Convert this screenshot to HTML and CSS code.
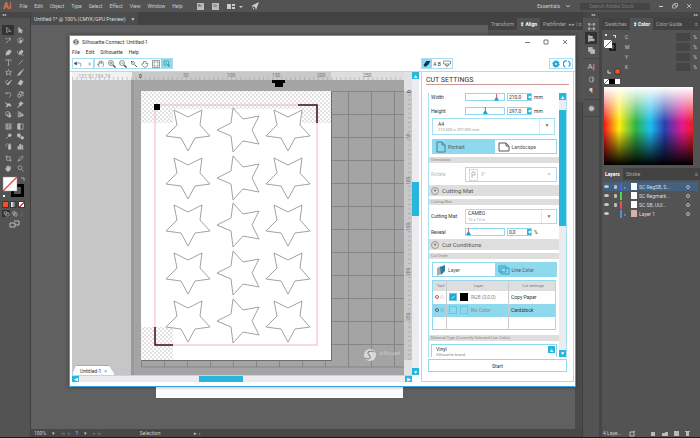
FILE: index.html
```
<!DOCTYPE html>
<html lang="en">
<head>
    <meta charset="UTF-8">
    <meta name="viewport" content="width=device-width, initial-scale=1.0">
    <title>Silhouette Connect: Untitled-1</title>
    <link rel="stylesheet" href="styles.css">
</head>
<body>

<header class="menubar">
    <span class="logo">Ai</span>
    <nav class="menu">
        <a href="#">File</a><a href="#">Edit</a><a href="#">Object</a><a href="#">Type</a><a href="#">Select</a><a href="#">Effect</a><a href="#">View</a><a href="#">Window</a><a href="#">Help</a>
    </nav>
    <button class="app-chip">Br</button>
    <button class="app-chip">St</button>
    <button class="bare" aria-label="Arrange documents"><svg width="16" height="7"><path fill="#ccc" d="M0 1h4v5H0zM5 1h3v2H5zM5 4h3v2H5zM12 3h4l-2 2z"/></svg></button>
    <button class="bare" aria-label="Share"><svg width="8" height="8"><path fill="#ccc" d="M8 0L5 8 4 5 0 4zM1 5l2 1v2z"/></svg></button>
    <div class="menubar-right">
        <button class="bare">Essentials<svg width="12" height="5"><path fill="none" stroke="#bbb" d="M6 1l2 2 2-2"/></svg></button>
        <input class="search" type="text" placeholder="Search Adobe Stock" aria-label="Search Adobe Stock">
        <button class="bare" aria-label="Minimize"><svg width="6" height="6"><path stroke="#ccc" d="M1 3.500h4"/></svg></button>
        <button class="bare" aria-label="Restore"><svg width="6" height="6"><path fill="none" stroke="#ccc" stroke-width=".7" d="M2 2V.5h3.500v3H4M.5 2h3.500v3H.5z"/></svg></button>
        <button class="bare" aria-label="Close"><svg width="6" height="6"><path stroke="#ccc" stroke-width=".8" d="M1 1l4 4M5 1L1 5"/></svg></button>
    </div>
</header>

<div class="workspace">
    <aside class="tools">
        <div class="panel-grip">◂◂</div>
        <div class="tool-group">
            <button class="active" aria-label="Selection"><svg viewBox="0 0 16 16"><path d="M4 1v12l3.500-3H13z"/></svg></button>
            <button aria-label="Direct selection"><svg viewBox="0 0 16 16"><path class="f" d="M4 1v12l3-3 2 4 2-1-2-4h4z"/></svg></button>
            <button aria-label="Magic wand"><svg viewBox="0 0 16 16"><path d="M2 14L9 7M10 1v4M8 4l5 2M14 3l-3 2M1 4h5M12 8l2 2"/></svg></button>
            <button aria-label="Lasso"><svg viewBox="0 0 16 16"><path d="M3 10C-1 5 4 2 8 2s8 3 5 7-6 2-9 2 0 4 2 3"/><path class="f" d="M7 5v9l5-4z"/></svg></button>
        </div>
        <div class="tool-group">
            <button aria-label="Pen"><svg viewBox="0 0 16 16"><path class="f" d="M2 14l2-8 6-4 4 4-4 6zM11 1l4 4"/></svg></button>
            <button aria-label="Curvature"><svg viewBox="0 0 16 16"><path class="f" d="M5 12l1-6 5-4 3 4-4 5z"/><path d="M1 4c-1 5 3 10 8 9s2 2 6 1"/></svg></button>
            <button aria-label="Type"><svg viewBox="0 0 16 16"><path d="M2 5V2h12v3M8 2v12M6 14h4"/></svg></button>
            <button aria-label="Line"><svg viewBox="0 0 16 16"><path d="M3 13L13 3"/></svg></button>
            <button aria-label="Star"><svg viewBox="0 0 16 16"><path d="M8 1l2 5h5l-4 3 2 5-5-3-5 3 2-5-4-3h5z"/></svg></button>
            <button aria-label="Brush"><svg viewBox="0 0 16 16"><path class="f" d="M15 1L8 10 6 8zM6 9l2 2c-1 3-4 4-7 3 3-1 2-4 5-5z"/></svg></button>
            <button aria-label="Shaper"><svg viewBox="0 0 16 16"><path d="M7 4C2 2-1 8 4 11s5 0 6-1"/><path class="f" d="M15 3L8 12l-3 1 1-3z"/></svg></button>
            <button aria-label="Eraser"><svg viewBox="0 0 16 16"><path class="f" d="M8 2l6 4-5 8-6-4zM1 10l7 4"/></svg></button>
        </div>
        <div class="tool-group">
            <button aria-label="Rotate"><svg viewBox="0 0 16 16"><path d="M2 2v4h4M3 6c3-4 10-3 10 3 0 3-2 5-4 5"/></svg></button>
            <button aria-label="Scale"><svg viewBox="0 0 16 16"><path d="M2 8v6h6V8zM5 7V2h9v9h-5M8 8l4-4M9 4h3v3"/></svg></button>
            <button aria-label="Width"><svg viewBox="0 0 16 16"><path class="f" d="M1 3l4 4 6-1 3 6-5-2-6 4 2-5z"/></svg></button>
            <button aria-label="Puppet warp"><svg viewBox="0 0 16 16"><path class="f" d="M9 1l5 5-3 1-2 4-5-5 4-2zM6 9l1 1-5 5z"/></svg></button>
            <button aria-label="Shape builder"><svg viewBox="0 0 16 16"><circle cx="6" cy="6" r="5"/><circle cx="9" cy="9" r="4"/><path class="f" d="M10 8v7l4-3z"/></svg></button>
            <button aria-label="Perspective grid"><svg viewBox="0 0 16 16"><path d="M3 1v13l11-3V8zM3 5l11 4M3 10h11M7 3v10M11 6v5"/></svg></button>
        </div>
        <div class="tool-group">
            <button aria-label="Mesh"><svg viewBox="0 0 16 16"><path d="M2 2h12v12H2zM2 6c4 3 8-2 12 1M2 11c4 2 8-2 12 0M6 2c-2 4 2 8 0 12M11 2c-2 4 2 8 0 12"/></svg></button>
            <button aria-label="Gradient"><svg viewBox="0 0 16 16"><path d="M2 2h12v12H2z"/><path class="f" d="M2 2h5v12H2z"/></svg></button>
            <button aria-label="Eyedropper"><svg viewBox="0 0 16 16"><path class="f" d="M11 1l4 4-4 4-4-4z"/><path d="M9 7l-6 6-1 1"/></svg></button>
            <button aria-label="Blend"><svg viewBox="0 0 16 16"><path class="f" d="M1 2h6v6H1z"/><circle cx="7" cy="8" r="3"/><circle class="f" cx="12" cy="11" r="3"/></svg></button>
            <button aria-label="Symbol sprayer"><svg viewBox="0 0 16 16"><path d="M1 3h2M1 7h2M4 1h2M4 5h2"/><path class="f" d="M8 5h5v9H8zM9 2h3v2H9z"/></svg></button>
            <button aria-label="Column graph"><svg viewBox="0 0 16 16"><path class="f" d="M2 8h2v5H2zM6 3h3v10H6zM11 5h2v8h-2z"/><path d="M1 14h14"/></svg></button>
        </div>
        <div class="tool-group">
            <button aria-label="Artboard"><svg viewBox="0 0 16 16"><path d="M4 1v11h11M1 4h11v11"/></svg></button>
            <button aria-label="Slice"><svg viewBox="0 0 16 16"><path d="M2 14L6 7l6-5 2 3-5 6z"/></svg></button>
            <button aria-label="Hand"><svg viewBox="0 0 16 16"><path class="f" d="M5 14L1 8l3 1V3l2 4 1-6 2 6 3-4v8l-3 3z"/></svg></button>
            <button aria-label="Zoom"><svg viewBox="0 0 16 16"><circle cx="7" cy="6" r="4.500"/><path d="M10 10l5 5"/></svg></button>
        </div>
        <svg class="fill-stroke" width="26" height="24" viewBox="0 0 26 24">
            <path fill="none" stroke="#000" stroke-width="3" d="M10.500 10.500h10v10h-10z"/>
            <path fill="#fff" stroke="#888" stroke-width=".5" d="M1 2h14v14H1z"/>
            <path stroke="#f23b3b" stroke-width="1.200" d="M1 16L15 2"/>
            <path fill="none" stroke="#aaa" d="M19 3h3v3"/>
            <path fill="#fff" d="M1 20h2v2H1z"/>
        </svg>
        <div class="paint-modes">
            <button class="solid" aria-label="Color"></button>
            <button class="grad" aria-label="Gradient"></button>
            <button class="none" aria-label="None"></button>
        </div>
        <svg class="draw-modes" width="26" height="20" viewBox="0 0 26 20">
            <path fill="#333" d="M0 0h8v7H0z"/>
            <g fill="none" stroke="#aaa" stroke-width=".8"><circle cx="3.500" cy="3" r="1.500"/><path d="M4 3h3v3H4z"/><circle cx="12" cy="3" r="1.500"/><path d="M12 3h3v3h-3z"/><path stroke="#777" d="M20 2v4"/></g>
            <path fill="none" stroke="#bbb" d="M8 13h5v4H8zM12 11h5v4h-4"/>
        </svg>
    </aside>

    <main class="document">
        <div class="doc-tabs"><button class="doc-tab">Untitled-1* @ 100% (CMYK/GPU Preview) <b>×</b></button></div>
        <div class="pasteboard"><div class="artboard"></div><div class="doc-scroll"></div></div>
        <footer class="status">
            <span>100%</span><i>▾</i><span class="dim">|◂ ◂</span><span>1</span><i>▾</i><span class="dim">▸ ▸|</span>
            <span class="status-tool">Selection</span><span class="status-arrows">▸ ‹</span>
        </footer>
    </main>

    <aside class="dock">
        <div class="panel-grip">◂◂</div>
        <div class="dock-group">
            <button aria-label="Transform"><svg viewBox="0 0 16 16"><path d="M3 3h10v10H3z" stroke-dasharray="3 1"/><path class="f" d="M1 1h3v3H1zM12 1h3v3h-3zM1 12h3v3H1zM12 12h3v3h-3z"/></svg></button>
            <button class="active" aria-label="Align"><svg viewBox="0 0 16 16"><path class="f" d="M1 1h2v14H1zM4 3h6v4H4zM4 9h10v4H4z"/></svg></button>
            <button aria-label="Pathfinder"><svg viewBox="0 0 16 16"><path class="f" d="M1 1h9v4H5v5H1zM6 6h9v9H6z"/></svg></button>
        </div>
        <div class="dock-group">
            <button class="glyph" aria-label="Character">A|</button>
            <button aria-label="OpenType"><svg viewBox="0 0 16 16"><ellipse cx="7" cy="8" rx="4" ry="6"/><path d="M9 1c6 2 5 12 0 14"/></svg></button>
            <button class="glyph" aria-label="Paragraph">¶</button>
        </div>
        <div class="dock-group">
            <button aria-label="Appearance"><svg viewBox="0 0 16 16"><circle class="f" cx="8" cy="8" r="5"/><circle cx="8" cy="8" r="7" stroke-dasharray="1 2"/></svg></button>
        </div>
    </aside>

    <aside class="panels">
        <div class="panel-grip end">▸▸</div>
        <section class="color-panel">
            <div class="panel-tabs"><button>Swatches</button><button class="active">⇕ Color</button><button>Color Guide</button><span class="panel-menu">≡</span></div>
            <div class="color-body">
                <svg class="color-proxy" width="17" height="52" viewBox="0 0 17 52">
                    <path fill="#ddd" d="M1 2h2v2H1zM9 3h3v3h-1V4H9z"/>
                    <path fill="none" stroke="#111" stroke-width="1.500" d="M6 12h5v6H6z"/>
                    <path fill="#fff" d="M0 8h8v8H0z"/><path stroke="#e33" d="M0 16l8-8"/>
                    <path fill="none" stroke="#ddd" d="M4 38v3h3"/>
                    <path fill="#f4511e" stroke="#222" stroke-width=".5" d="M11 37h5v5h-5z"/>
                    <path fill="#fff" d="M0 47h5v5H0zM11 47h5v5h-5z"/><path fill="#000" d="M5 47h6v5H5z"/><path stroke="#e33" d="M0 52l5-5"/>
                </svg>
                <div class="channels">
                    <label><span>C</span><input type="text"><span>%</span></label>
                    <label><span>M</span><input type="text"><span>%</span></label>
                    <label><span>Y</span><input type="text"><span>%</span></label>
                    <label><span>K</span><input type="text"><span>%</span></label>
                </div>
            </div>
            <div class="spectrum"></div>
        </section>
        <section class="layers-panel">
            <div class="panel-tabs"><button class="active">Layers</button><button>Stroke</button><span class="panel-menu">≡</span></div>
            <ul class="layers">
                <li class="selected"><i class="eye"></i><i class="lock"></i><i class="tag blue"></i><b>›</b><i class="thumb"></i><span>SC RegSB, S...</span><i class="target"></i></li>
                <li><i class="eye"></i><i class="lock"></i><i class="tag green"></i><b></b><i class="thumb"></i><span>SC Regmark...</span><i class="target"></i></li>
                <li><i class="eye"></i><i class="lock"></i><i class="tag red"></i><b></b><i class="thumb"></i><span>SC SB, UUI...</span><i class="target"></i></li>
                <li><i class="eye"></i><i class="lock off"></i><i class="tag sky"></i><b>›</b><i class="thumb stars"></i><span>Layer 1</span><i class="target"></i></li>
            </ul>
            <div class="layers-foot">
                <span>4 Laye...</span>
                <svg width="66" height="7" viewBox="0 0 66 7"><path fill="none" stroke="#bbb" d="M1 2h4v4H1zM4 2l2-1"/><path fill="#bbb" d="M22 2h4v4h-4zM33 3h3V2h3v4h-6zM45 1h5v5h-5zM57 2h3v4h-3zM56 1h5v1h-5z"/></svg>
            </div>
        </section>
    </aside>
</div>

<div class="align-panel">
    <div class="panel-tabs"><button>Transform</button><button class="active">⇕ Align</button><button>Pathfinder</button><span class="panel-menu">▸▸ | ≡</span></div>
</div>

<div class="window">
    <div class="titlebar">
        <svg width="6" height="6" viewBox="0 0 12 12"><circle cx="6" cy="6" r="5.500" fill="#777"/><path fill="none" stroke="#fff" stroke-width="1.500" d="M9 3C5 2 3 5 6 6s2 4-3 3"/></svg>
        <span class="window-title">Silhouette Connect: Untitled-1</span>
        <div class="window-buttons">
            <button aria-label="Minimize"><svg width="6" height="6"><path stroke="#444" stroke-width=".7" d="M1 3.500h5"/></svg></button>
            <button aria-label="Maximize"><svg width="6" height="6"><path fill="none" stroke="#444" stroke-width=".7" d="M1 1h4v4H1z"/></svg></button>
            <button aria-label="Close"><svg width="6" height="6"><path stroke="#444" stroke-width=".7" d="M1 1l4 4M5 1L1 5"/></svg></button>
        </div>
    </div>
    <nav class="window-menu"><a href="#">File</a><a href="#">Edit</a><a href="#">Silhouette</a><a href="#">Help</a></nav>
    <div class="toolbar">
        <div class="tool-box narrow">
            <button aria-label="Undo"><svg viewBox="0 0 16 16"><path class="f" d="M0 7l5-3v6z"/><path d="M4 6h7c4 0 3 5 2 7"/></svg></button>
            <button class="faded" aria-label="Redo"><svg viewBox="0 0 16 16"><path class="f" d="M14 8l-4-3v6z"/></svg></button>
        </div>
        <div class="tool-box">
            <button aria-label="Pan"><svg viewBox="0 0 16 16"><path d="M5 14L1 8l3 1V4l2-1 1-1 2 0 1 1 2 1 1 7-2 3M6 3v5M9 2v6"/></svg></button>
            <button aria-label="Zoom in"><svg viewBox="0 0 16 16"><circle cx="6" cy="6" r="5"/><path d="M6 3v6M3 6h6"/><path d="M10 10l5 5" stroke-width="3"/></svg></button>
            <button aria-label="Zoom out"><svg viewBox="0 0 16 16"><circle cx="6" cy="6" r="5"/><path d="M3 6h6"/><path d="M10 10l5 5" stroke-width="3"/></svg></button>
            <button aria-label="Zoom selection"><svg viewBox="0 0 16 16"><circle cx="6" cy="6" r="3"/><path d="M2 2l3 3M9 9l5 5" stroke-width="2"/></svg></button>
            <button aria-label="Drag zoom"><svg viewBox="0 0 16 16"><path d="M5 13L1 8l4-1V3h5v4h4l-2 6-4 2z"/></svg></button>
            <button aria-label="Fit to window"><svg viewBox="0 0 16 16"><path d="M1 1h14v14H1zM4 7V4h3M12 7V4H9M4 9v3h3M12 9v3H9"/></svg></button>
            <button class="on" aria-label="Show cut border"><svg viewBox="0 0 16 16"><path stroke="#2a8aa8" d="M2 2h9v11M2 2v8h12M5 5l9 9"/></svg></button>
        </div>
        <div class="tool-box narrow push">
            <button class="on" aria-label="Cut settings"><svg viewBox="0 0 16 16"><path fill="#135" stroke="none" d="M1 10L7 2h8l-5 8-6 4z"/></svg></button>
            <button aria-label="Registration">A B</button>
            <button aria-label="Send"><svg viewBox="0 0 16 16"><path d="M1 2h14v6H1zM5 8v3h6V8M8 11v4"/></svg></button>
        </div>
        <div class="tool-box">
            <button aria-label="Preferences"><svg viewBox="0 0 16 16"><circle cx="8" cy="8" r="4" fill="none" stroke="#1e9fd4" stroke-width="4"/><circle cx="8" cy="8" r="6.500" fill="none" stroke="#1e9fd4" stroke-width="2" stroke-dasharray="3 2"/></svg></button>
            <button aria-label="Sync"><svg viewBox="0 0 16 16"><path fill="none" stroke="#1e9fd4" stroke-width="2.500" d="M5 14A6 6 0 0 1 8 2M10 2a6 6 0 0 1 1 11"/></svg></button>
        </div>
    </div>

    <div class="work">
        <div class="view">
            <svg class="drawing" viewBox="0 0 340 303" preserveAspectRatio="xMinYMin slice">
                <defs>
                    <pattern id="hatch" width="4" height="4" patternUnits="userSpaceOnUse"><path fill="none" stroke="#cfcfcf" stroke-width=".6" d="M0 0l4 4M4 0L0 4"/></pattern>
                    <pattern id="grid" width="23" height="23" patternUnits="userSpaceOnUse"><path fill="none" stroke="#858585" stroke-width="2" d="M0 23V0h23"/></pattern>
                    <pattern id="hticks" width="4.550" height="8" patternUnits="userSpaceOnUse"><path stroke="#999" stroke-width=".5" d="M.5 5v3"/></pattern>
                    <pattern id="vticks" width="7" height="4.550" patternUnits="userSpaceOnUse"><path stroke="#999" stroke-width=".6" d="M0 .5h3"/></pattern>
                    <polygon id="star" points="-14,-20 0,-13 14,-20 12,-5 22,6 7,8 0,21 -7,8 -22,6 -11,-5"/>
                    <polygon id="star-turned" points="-21,0 -7,-7 -5,-22 5,-11 21,-14 14,0 21,14 5,11 -5,22 -7,6"/>
                    <g id="star-row"><use href="#star" x="47"/><use href="#star-turned" x="97"/><use href="#star" x="147"/></g>
                </defs>

                <!-- mat and grid -->
                <rect width="340" height="303" fill="#c6c6c6"/>
                <rect x="59" y="8" width="273" height="295" fill="#a4a4a4"/>
                <rect x="59" y="8" width="3" height="295" fill="#999"/>
                <g transform="translate(69 19)">
                    <rect width="263" height="276" fill="url(#grid)"/>
                    <path stroke="#858585" d="M0 276h263"/>
                </g>

                <!-- rulers -->
                <rect width="340" height="8" fill="#c9c9c9"/>
                <rect width="60" height="8" fill="#f1f1f1"/>
                <rect x="259" width="73" height="8" fill="#dedede"/>
                <rect width="332" height="8" fill="url(#hticks)"/>
                <rect x="332" width="8" height="303" fill="#c9c9c9"/>
                <rect x="332" width="8" height="19" fill="#e2e2e2"/>
                <rect x="332" y="288" width="8" height="15" fill="#e2e2e2"/>
                <rect x="332" y="19" width="8" height="269" fill="url(#vticks)"/>
                <g class="ruler-text">
                    <text class="coords" x="5" y="6">-157.82  184.74</text>
                    <text class="zero" x="67" y="6">0</text><text x="111" y="5">50</text><text x="155" y="5">100</text><text x="200" y="5">150</text><text x="245" y="5">200</text><text x="291" y="5">250</text>
                    <text class="zero" transform="translate(339 21) rotate(-90)">0</text>
                    <text transform="translate(338 67) rotate(-90)">50</text>
                    <text transform="translate(338 113) rotate(-90)">100</text>
                    <text transform="translate(338 159) rotate(-90)">150</text>
                    <text transform="translate(338 204) rotate(-90)">200</text>
                    <text transform="translate(338 249) rotate(-90)">250</text>
                </g>
                <path d="M200 8h13v3h-2v4h-8v-4h-3z"/>

                <!-- page -->
                <g transform="translate(69 19)">
                    <rect x="1" y="1" width="190" height="269" fill="#6d6d6d"/>
                    <rect width="190" height="269" fill="#fff"/>
                    <path fill="url(#hatch)" d="M0 0h190v32h-29V18H32v14H0zM0 236h32v33H0z"/>
                    <rect x="14" y="14" width="162" height="240" fill="none" stroke="#f8b4bc"/>
                    <g fill="#fff" stroke="#8a8a8a" stroke-width=".8">
                        <use href="#star-row" y="39"/><use href="#star-row" y="87"/><use href="#star-row" y="134"/><use href="#star-row" y="182"/><use href="#star-row" y="230"/>
                    </g>
                    <rect x="13" y="13" width="6" height="6"/>
                    <path fill="none" stroke="#401018" stroke-width="1.500" d="M157 14h19v18M14 236v18h18"/>
                </g>

                <!-- mat logo -->
                <circle cx="298" cy="283" r="6" fill="#dadada"/>
                <path fill="none" stroke="#8f8f8f" stroke-width="1.200" d="M302 280c-4-2-8 0-5 3s0 5-4 3"/>
                <text class="brand" x="307" y="283">silhouet</text>
            </svg>
            <button class="sheet-tab">Untitled-1 <i>×</i></button>
        </div>
        <div class="scrollbar vertical"><button class="up" aria-label="Scroll up"></button><span class="before"></span><span class="thumb-bar"></span><span class="after"></span><button class="down" aria-label="Scroll down"></button></div>
        <div class="scrollbar horizontal"><button class="left" aria-label="Scroll left"></button><span class="before"></span><span class="thumb-bar"></span><span class="after"></span><button class="right" aria-label="Scroll right"></button></div>

        <section class="settings">
            <h2>CUT SETTINGS</h2>
            <div class="settings-scroll">
                <div class="settings-body">
                    <div class="field first">
                        <label for="width">Width</label>
                        <input type="range" aria-label="Width slider" min="0" max="100" value="85">
                        <span class="number"><input type="text" id="width" value="210,0"><button aria-label="Step width"></button></span>
                        <span>mm</span>
                    </div>
                    <div class="field">
                        <label for="height">Height</label>
                        <input type="range" aria-label="Height slider" min="0" max="100" value="51">
                        <span class="number"><input type="text" id="height" value="297,0"><button aria-label="Step height"></button></span>
                        <span>mm</span>
                    </div>
                    <div class="picker paper">
                        <select aria-label="Paper size"><option>A4</option></select>
                        <small>210.000 × 297.000 mm</small>
                    </div>
                    <div class="switch">
                        <button class="on"><svg width="10" height="12"><path fill="none" stroke="#4a7f90" d="M1 1h5l3 3v7H1zM6 1v3h3"/></svg>Portrait</button>
                        <button><svg width="12" height="10"><path fill="none" stroke="#555" d="M1 1h7l3 3v5H1zM8 1v3h3"/></svg>Landscape</button>
                    </div>
                    <h4>Orientation</h4>
                    <div class="field tall disabled">
                        <label for="rotate">Rotate</label>
                        <div class="picker">
                            <svg class="rotate-icon" width="9" height="12"><path fill="none" stroke="#bbb" stroke-width=".8" stroke-dasharray="2 1" d="M.5.5h8v11h-8z"/><path fill="none" stroke="#bbb" d="M3 9V3h3v3H3"/></svg>
                            <select id="rotate" disabled><option>0°</option></select>
                        </div>
                    </div>
                    <h3><i>▼</i>Cutting Mat</h3>
                    <h4>Cutting Mat</h4>
                    <div class="field tall">
                        <label for="mat">Cutting Mat</label>
                        <div class="picker">
                            <select id="mat"><option>CAMEO</option></select>
                            <small>12 x 12 in</small>
                        </div>
                    </div>
                    <div class="field">
                        <label for="reveal">Reveal</label>
                        <input type="range" aria-label="Reveal slider" min="0" max="100" value="0">
                        <span class="number"><input type="text" id="reveal" value="0,0"><button aria-label="Step reveal"></button></span>
                        <span>%</span>
                    </div>
                    <h3><i>▼</i>Cut Conditions</h3>
                    <h4>Cut Order</h4>
                    <div class="switch">
                        <button><svg width="10" height="12"><path fill="#aaa" d="M1 4l4-2v8l-4 2z"/><path fill="#2b7f9d" d="M4 3l5-2v6l-4 4z"/></svg>Layer</button>
                        <button class="on"><svg width="12" height="10"><path fill="none" stroke="#2a9fc4" d="M1 1h7v6H1zM3 3h8v6H3z"/></svg>Line Color</button>
                    </div>
                    <table>
                        <thead><tr><th>Tool</th><th>Layer</th><th>Cut settings</th></tr></thead>
                        <tbody>
                            <tr><td><i class="tool-dot"></i><i class="tool-dot two"></i></td><td><div class="layer-cell"><input type="checkbox" aria-label="Cut RGB 0,0,0" checked><i class="chip"></i>RGB (0,0,0)</div></td><td>Copy Paper</td></tr>
                            <tr class="on"><td><i class="tool-dot"></i><i class="tool-dot two"></i></td><td><div class="layer-cell"><input type="checkbox" aria-label="Cut no color"><i class="chip"></i>No Color</div></td><td>Cardstock</td></tr>
                            <tr><td></td><td></td><td></td></tr>
                        </tbody>
                    </table>
                    <h4>Material Type (Currently Selected Line Color)</h4>
                    <div class="material"><div>Vinyl<small>Silhouette brand</small></div><button class="up" aria-label="Previous material"></button></div>
                </div>
                <div class="scrollbar vertical"><button class="up" aria-label="Scroll up"></button><span class="before"></span><span class="thumb-bar"></span><span class="after"></span><button class="down" aria-label="Scroll down"></button></div>
            </div>
            <button class="start">Start</button>
        </section>
    </div>
</div>

</body>
</html>
```
FILE: styles.css
```
* {
    box-sizing: border-box;
}
body {
    margin: 0;
    height: 100vh;
    display: flex;
    flex-direction: column;
    overflow: hidden;
    font: 5px/6px Roboto, "Noto Sans", sans-serif;
    color: #ccc;
    background-color: #535353;
    border-bottom: 1px solid #1a1a1a;
}
button {
    font: inherit;
    color: inherit;
    background: none;
    border: 0;
    padding: 0;
    margin: 0;
    display: flex;
    align-items: center;
    justify-content: center;
    white-space: nowrap;
}
a {
    color: inherit;
    text-decoration: none;
}
i {
    font-style: normal;
}
svg {
    display: block;
    flex: none;
}
h2, h3, h4, ul {
    margin: 0;
    padding: 0;
    font-weight: normal;
}
input, select {
    font: inherit;
    color: inherit;
    margin: 0;
    padding: 0;
    min-width: 0;
    border: 0;
    border-radius: 0;
    background: none;
}

/* application menu bar */
.menubar {
    flex: none;
    height: 12px;
    display: flex;
    align-items: center;
    gap: 8px;
    padding: 0 8px 0 3px;
}
.logo {
    font-size: 9px;
    font-weight: bold;
    color: #c87b55;
}
.menu {
    display: flex;
    gap: 7px;
    margin-right: 6px;
}
.app-chip {
    width: 7px;
    height: 7px;
    background-color: #bbb;
    color: #444;
    font-size: 4px;
}
.menubar-right {
    margin-left: auto;
    display: flex;
    align-items: center;
    gap: 8px;
}
.search {
    width: 70px;
    height: 7px;
    padding-left: 9px;
    background-color: #454545;
}
.search::placeholder {
    color: #777;
}

/* workspace columns */
.workspace {
    flex: 1;
    min-height: 0;
    display: flex;
}
.panel-grip {
    height: 6px;
    padding-left: 2px;
    line-height: 5px;
    font-size: 4px;
    background-color: #464646;
}
.panel-grip.end {
    text-align: right;
    padding-right: 2px;
}
.tools {
    width: 31px;
    flex: none;
    display: flex;
    flex-direction: column;
    gap: 2px;
    border-right: 1px solid #3e3e3e;
}
.tools .panel-grip {
    margin-bottom: 5px;
}
.tool-group {
    display: grid;
    grid-template-columns: 12px 12px;
    grid-auto-rows: 10px;
    padding-left: 2px;
}
.tool-group svg, .dock svg {
    width: 7px;
    height: 7px;
    fill: none;
    stroke: #bdbdbd;
    stroke-width: 1.500px;
}
.tool-group .f, .dock .f {
    fill: #bdbdbd;
}
.tool-group .active, .dock .active {
    background-color: #333;
}
.fill-stroke, .draw-modes {
    margin-left: 2px;
}
.paint-modes {
    display: flex;
    gap: 3px;
    padding: 1px 0 1px 3px;
}
.paint-modes button {
    width: 5px;
    height: 5px;
    outline: 1px solid #3a3a3a;
}
.solid {
    background-color: #f4511e;
}
.grad {
    background: linear-gradient(90deg, #fff, #333);
}
.none {
    background: linear-gradient(135deg, #fff 40%, #e33 40%, #e33 60%, #fff 60%);
}

/* document */
.document {
    flex: 1;
    min-width: 0;
    display: flex;
    flex-direction: column;
}
.doc-tabs {
    height: 13px;
    display: flex;
    background-color: #424242;
}
.doc-tab {
    padding: 0 4px 0 3px;
    gap: 6px;
    background-color: #4c4c4c;
    color: #ddd;
}
.pasteboard {
    flex: 1;
    position: relative;
    background-color: #606060;
    padding: 75px 179px 31px 125px;
    display: flex;
}
.artboard {
    flex: 1;
    background-color: #fff;
}
.doc-scroll {
    position: absolute;
    top: 0;
    right: 0;
    bottom: 0;
    width: 7px;
    background-color: #4a4a4a;
}
.status {
    height: 8px;
    display: flex;
    align-items: center;
    gap: 6px;
    padding-left: 3px;
    background-color: #474747;
}
.dim {
    color: #777;
}
.status-tool {
    margin-left: 32px;
}
.status-arrows {
    margin-left: 28px;
}

/* dock and panels */
.dock {
    width: 17px;
    flex: none;
    border-left: 1px solid #3e3e3e;
}
.dock .panel-grip {
    padding-left: 8px;
}
.dock-group {
    display: flex;
    flex-direction: column;
    align-items: center;
    padding: 2px 0;
    border-bottom: 1px solid #454545;
}
.dock-group button {
    width: 12px;
    height: 12px;
}
.glyph {
    font-size: 8px;
}
.panels {
    width: 101px;
    flex: none;
    display: flex;
    flex-direction: column;
    border-left: 3px solid #454545;
}
.panel-tabs {
    height: 12px;
    display: flex;
    background-color: #424242;
    color: #aaa;
}
.panel-tabs button {
    padding: 0 3px;
}
.panel-tabs .active {
    background-color: #535353;
    color: #fff;
    font-weight: bold;
}
.panel-menu {
    margin: auto 2px auto auto;
    white-space: nowrap;
}
.color-body {
    display: flex;
    padding: 2px 3px 0 2px;
}
.channels {
    flex: 1;
    padding-left: 4px;
}
.channels label {
    display: flex;
    align-items: center;
    gap: 3px;
    height: 10px;
}
.channels input {
    width: 14px;
    height: 8px;
    margin-left: auto;
    background-color: #454545;
}
.spectrum {
    height: 78px;
    margin: 3px 7px 3px 2px;
    background:
        linear-gradient(#fff, rgba(255, 255, 255, 0) 45%, rgba(0, 0, 0, 0) 55%, #000),
        linear-gradient(90deg, #f01818, #ffee10 17%, #2cb34a 36%, #1cc0f0 52%, #2a3fb0 68%, #e5188c 88%, #ed1c24);
}
.layers {
    list-style: none;
    padding: 2px 2px 0 1px;
}
.layers li {
    height: 9px;
    display: grid;
    grid-template-columns: 9px 8px 4px 7px 8px 1fr 12px;
    align-items: center;
    color: #ddd;
}
.layers .selected {
    background-color: #44617f;
}
.eye {
    width: 5px;
    height: 3px;
    margin-left: 1px;
    border-radius: 50%;
    background-color: #ccc;
}
.lock {
    width: 3px;
    height: 4px;
    margin-left: 2px;
    border-radius: 1px;
    background-color: #bbb;
}
.lock.off {
    background: none;
}
.tag {
    width: 2px;
    height: 8px;
}
.blue {
    background-color: #4f5fe8;
}
.green {
    background-color: #4fd84f;
}
.red {
    background-color: #e84f4f;
}
.sky {
    background-color: #4f8fe8;
}
.thumb {
    width: 6px;
    height: 7px;
    background-color: #fff;
}
.thumb.stars {
    background-color: #d8b0a8;
}
.target {
    width: 4px;
    height: 4px;
    border: 1px solid #bbb;
    border-radius: 50%;
}
.layers-panel {
    flex: 1;
    display: flex;
    flex-direction: column;
}
.layers-foot {
    margin-top: auto;
    height: 8px;
    display: flex;
    align-items: center;
    gap: 8px;
    padding-left: 1px;
}
.align-panel {
    position: absolute;
    top: 18px;
    right: 117px;
    width: 95px;
    height: 84px;
    background-color: #535353;
}

/* plug-in window, floating over the workspace */
.window {
    position: absolute;
    inset: 35px 124px 51px 69px;
    display: flex;
    flex-direction: column;
    background-color: #fff;
    border: 1px solid #3c9fd8;
    color: #333;
    box-shadow: 0 0 4px rgba(0, 0, 0, 0.4);
}
.titlebar {
    height: 12px;
    display: flex;
    align-items: center;
    gap: 3px;
    padding: 0 7px 0 3px;
}
.window-buttons {
    display: flex;
    gap: 13px;
    margin-left: auto;
}
.window-menu {
    height: 8px;
    display: flex;
    align-items: center;
    gap: 6px;
    padding-left: 2px;
}
.toolbar {
    height: 15px;
    display: flex;
    align-items: center;
    padding: 0 2px;
}
.tool-box {
    display: flex;
    height: 11px;
    border: 1px solid #a5dff0;
}
.tool-box button {
    width: 11px;
    height: 9px;
}
.tool-box.narrow button {
    width: 10px;
}
.tool-box svg {
    width: 8px;
    height: 8px;
    fill: none;
    stroke: #555;
    stroke-width: 1.200px;
}
.tool-box .f {
    fill: #444;
}
.faded {
    opacity: 0.4;
}
.on {
    background-color: #8fd9ee;
}
.push {
    margin-left: auto;
    margin-right: 96px;
}

/* work area */
.work {
    flex: 1;
    min-height: 0;
    display: grid;
    grid-template-columns: 1fr 7px 155px;
    grid-template-rows: 1fr 7px;
    padding: 0 1px 4px 2px;
    border-top: 1px solid #a5dff0;
}
.view {
    position: relative;
    min-width: 0;
    min-height: 0;
    overflow: hidden;
}
.drawing {
    width: 100%;
    height: 100%;
}
.ruler-text {
    font-size: 5px;
    fill: #777;
}
.ruler-text .coords {
    fill: #aaa;
}
.ruler-text .zero {
    fill: #222;
}
.brand {
    font-size: 6px;
    fill: #c8c8c8;
}
.sheet-tab {
    position: absolute;
    left: 0;
    bottom: 0;
    width: 43px;
    height: 10px;
    gap: 3px;
    background-color: #fff;
    border: 1px solid #5cc4e0;
    border-bottom: 0;
    clip-path: polygon(0 100%, 10% 0, 85% 0, 100% 100%);
}
.sheet-tab i {
    color: #1e9fd4;
}
.scrollbar {
    display: flex;
    background-color: #ececf0;
}
.vertical {
    flex-direction: column;
    width: 7px;
}
.horizontal {
    grid-area: 2 / 1;
    height: 7px;
    border-top: 1px solid #a5dff0;
}
.scrollbar button, .material button, .number button {
    flex: none;
    width: 7px;
    height: 7px;
    color: #fff;
    background-color: #29b6dc;
    font-size: 5px;
}
.horizontal button {
    height: 6px;
}
.up::before {
    content: "▲";
}
.down::before {
    content: "▼";
}
.left::before {
    content: "◀";
}
.right::before {
    content: "▶";
}
.thumb-bar {
    flex: 34;
    background-color: #29b6dc;
}
.before {
    flex: 103;
}
.after {
    flex: 152;
}
.horizontal .before {
    flex: 120;
}
.horizontal .thumb-bar {
    flex: 44;
}
.horizontal .after {
    flex: 162;
}
.settings-scroll .before {
    flex: 10;
}
.settings-scroll .thumb-bar {
    flex: 115;
}
.settings-scroll .after {
    flex: 123;
}

/* cut settings */
.settings {
    grid-area: 1 / 3 / 3 / 4;
    margin-left: 2px;
    min-height: 0;
    display: flex;
    flex-direction: column;
    padding: 4px 6px 9px;
    border: 1px solid #a5dff0;
    border-top: 0;
}
h2 {
    font-size: 7px;
    line-height: 8px;
    border-bottom: 1px solid #c99;
    margin: 0 -2px 8px;
}
.settings-scroll {
    flex: 1;
    min-height: 0;
    display: flex;
    border: 1px solid #a5dff0;
    border-width: 0 1px;
}
.settings-body {
    flex: 1;
    min-width: 0;
    overflow: hidden;
}
.field {
    display: grid;
    grid-template-columns: 32px 40px 25px 1fr;
    column-gap: 2px;
    align-items: center;
    height: 9px;
    margin: 0 2px 3px;
}
.field.first {
    height: 7px;
    margin-bottom: 6px;
}
.field.tall {
    height: 16px;
    grid-template-columns: 32px 1fr;
}
.disabled {
    color: #bbb;
}
input[type="range"] {
    appearance: none;
    width: 40px;
    height: 8px;
    border: 1px solid #8fd9ee;
}
input[type="range"]::-webkit-slider-thumb {
    appearance: none;
    width: 5px;
    height: 7px;
    background: linear-gradient(#d66, #d66) 50% 0 / 1px 4px no-repeat, #1e9fd4;
    clip-path: polygon(40% 0, 60% 0, 60% 50%, 100% 100%, 0 100%, 40% 50%);
}
.number {
    display: flex;
    height: 8px;
    border: 1px solid #8fd9ee;
}
.number input {
    flex: 1;
    padding-left: 1px;
}
.number button {
    width: 4px;
    height: 6px;
    font-size: 4px;
}
.number button::before {
    content: "◆";
}
.picker {
    position: relative;
    height: 15px;
    border: 1px solid #a5dff0;
    display: flex;
}
.picker select {
    appearance: none;
    flex: 1;
    padding: 0 0 6px 2px;
}
.picker::after {
    content: "▼";
    width: 14px;
    line-height: 13px;
    text-align: center;
    color: #777;
    border-left: 1px solid #d5eef6;
}
.disabled .picker::after {
    color: #ccc;
    border-left: 0;
}
.picker small {
    position: absolute;
    left: 2px;
    bottom: 0;
    color: #999;
    font-size: 4px;
    line-height: 6px;
}
.paper {
    height: 17px;
    margin: 0 4px 4px 3px;
}
.paper select {
    padding-left: 5px;
}
.paper small {
    left: 5px;
    bottom: 1px;
}
.disabled .picker select {
    padding: 0 0 0 3px;
    color: #bbb;
    opacity: 1;
}
.rotate-icon {
    margin: 1px 0 0 3px;
}
.switch {
    display: grid;
    grid-template-columns: 1fr 1fr;
    height: 15px;
    margin: 0 2px 3px 3px;
    border: 1px solid #8fd9ee;
}
.switch button {
    justify-content: flex-start;
    gap: 2px;
    padding-left: 3px;
    color: #555;
}
h4 {
    height: 6px;
    padding-left: 2px;
    margin-bottom: 3px;
    font-size: 4px;
    line-height: 6px;
    color: #888;
    background-color: #dedede;
}
h3 {
    height: 11px;
    display: flex;
    align-items: center;
    gap: 3px;
    padding-left: 2px;
    margin-bottom: 3px;
    font-size: 6px;
    color: #555;
    background-color: #dedede;
}
h3 i {
    width: 8px;
    height: 8px;
    border: 1px solid #999;
    border-radius: 50%;
    font-size: 4px;
    line-height: 6px;
    text-align: center;
}
table {
    width: 124px;
    height: 50px;
    margin: 0 0 5px 3px;
    border-collapse: collapse;
    table-layout: fixed;
    border: 1px solid #8fd9ee;
}
th, td {
    padding: 0 0 0 2px;
    font-weight: normal;
    border-right: 1px solid #ccc;
}
th {
    height: 10px;
    font-size: 4px;
    color: #777;
    background-color: #dedede;
}
td {
    height: 13px;
}
th:first-child {
    width: 14px;
}
th:last-child {
    width: 47px;
}
.layer-cell {
    display: flex;
    align-items: center;
    gap: 3px;
    color: #888;
}
.layer-cell input {
    appearance: none;
    width: 8px;
    height: 8px;
    border: 1px solid #6cc6df;
}
.layer-cell input:checked {
    background-color: #1ea8d4;
    color: #fff;
    line-height: 6px;
    text-align: center;
}
.layer-cell input:checked::before {
    content: "✓";
    display: block;
}
.chip {
    width: 8px;
    height: 8px;
    background-color: #000;
}
.on .chip {
    background: none;
    border: 1px solid #6cc6df;
}
.tool-dot {
    display: inline-block;
    width: 4px;
    height: 4px;
    border: 1px solid #e04848;
    border-radius: 50%;
}
.tool-dot.two {
    border-color: #ddd;
    margin-left: 1px;
}
.on .tool-dot {
    border-color: #7a5a70;
}
.on .tool-dot.two {
    border-color: #6cc6df;
}
.material {
    display: flex;
    justify-content: space-between;
    height: 20px;
    margin: 0 2px;
    padding: 1px 1px 0 4px;
    border: 1px solid #8fd9ee;
}
.material small {
    display: block;
    font-size: 4px;
    color: #888;
}
.start {
    height: 13px;
    margin: 2px 0 0;
    border: 1px solid #8fd9ee;
}
```
